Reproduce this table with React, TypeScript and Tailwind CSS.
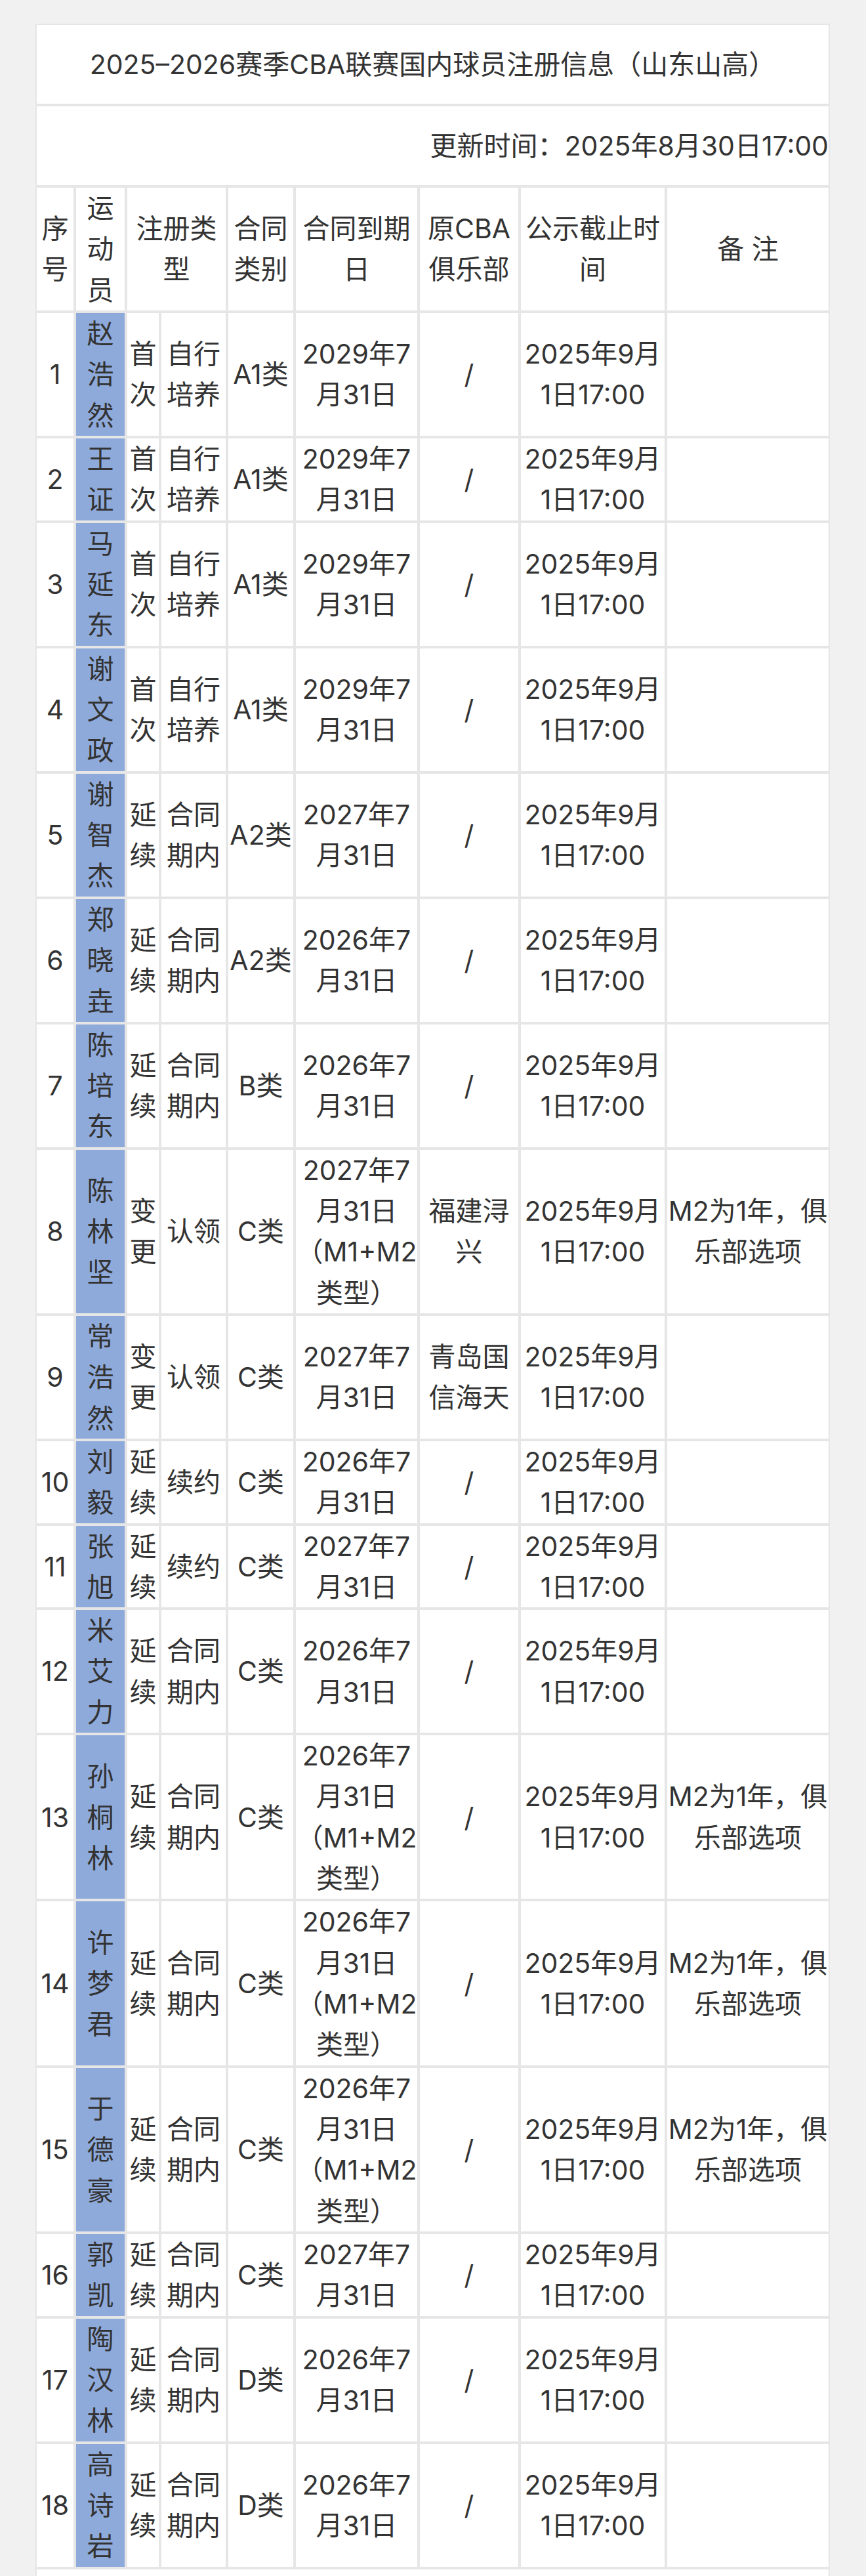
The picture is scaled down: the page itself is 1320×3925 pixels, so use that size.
type Row = {
  no: string;
  name: string;
  kind: string[];
  sub: string[];
  cls: string;
  date: string[];
  club: string[];
  note: string[];
};

const short = (y: string) => [`${y}年7`, "月31日"];
const long = (y: string) => [`${y}年7`, "月31日", "（M1+M2", "类型）"];
const option = ["M2为1年，俱", "乐部选项"];

const rows: Row[] = [
  { no: "1", name: "赵浩然", kind: ["首", "次"], sub: ["自行", "培养"], cls: "A1类", date: short("2029"), club: ["/"], note: [] },
  { no: "2", name: "王证", kind: ["首", "次"], sub: ["自行", "培养"], cls: "A1类", date: short("2029"), club: ["/"], note: [] },
  { no: "3", name: "马延东", kind: ["首", "次"], sub: ["自行", "培养"], cls: "A1类", date: short("2029"), club: ["/"], note: [] },
  { no: "4", name: "谢文政", kind: ["首", "次"], sub: ["自行", "培养"], cls: "A1类", date: short("2029"), club: ["/"], note: [] },
  { no: "5", name: "谢智杰", kind: ["延", "续"], sub: ["合同", "期内"], cls: "A2类", date: short("2027"), club: ["/"], note: [] },
  { no: "6", name: "郑晓垚", kind: ["延", "续"], sub: ["合同", "期内"], cls: "A2类", date: short("2026"), club: ["/"], note: [] },
  { no: "7", name: "陈培东", kind: ["延", "续"], sub: ["合同", "期内"], cls: "B类", date: short("2026"), club: ["/"], note: [] },
  { no: "8", name: "陈林坚", kind: ["变", "更"], sub: ["认领"], cls: "C类", date: long("2027"), club: ["福建浔", "兴"], note: option },
  { no: "9", name: "常浩然", kind: ["变", "更"], sub: ["认领"], cls: "C类", date: short("2027"), club: ["青岛国", "信海天"], note: [] },
  { no: "10", name: "刘毅", kind: ["延", "续"], sub: ["续约"], cls: "C类", date: short("2026"), club: ["/"], note: [] },
  { no: "11", name: "张旭", kind: ["延", "续"], sub: ["续约"], cls: "C类", date: short("2027"), club: ["/"], note: [] },
  { no: "12", name: "米艾力", kind: ["延", "续"], sub: ["合同", "期内"], cls: "C类", date: short("2026"), club: ["/"], note: [] },
  { no: "13", name: "孙桐林", kind: ["延", "续"], sub: ["合同", "期内"], cls: "C类", date: long("2026"), club: ["/"], note: option },
  { no: "14", name: "许梦君", kind: ["延", "续"], sub: ["合同", "期内"], cls: "C类", date: long("2026"), club: ["/"], note: option },
  { no: "15", name: "于德豪", kind: ["延", "续"], sub: ["合同", "期内"], cls: "C类", date: long("2026"), club: ["/"], note: option },
  { no: "16", name: "郭凯", kind: ["延", "续"], sub: ["合同", "期内"], cls: "C类", date: short("2027"), club: ["/"], note: [] },
  { no: "17", name: "陶汉林", kind: ["延", "续"], sub: ["合同", "期内"], cls: "D类", date: short("2026"), club: ["/"], note: [] },
  { no: "18", name: "高诗岩", kind: ["延", "续"], sub: ["合同", "期内"], cls: "D类", date: short("2026"), club: ["/"], note: [] },
];

function Cell({ lines, className = "" }: { lines: string[]; className?: string }) {
  return (
    <div className={`flex flex-col items-center justify-center whitespace-nowrap bg-white text-center ${className}`}>
      {lines.map((l, i) => (
        <span key={i}>{l}</span>
      ))}
    </div>
  );
}

export default function App() {
  return (
    <div className="min-h-screen bg-[#f1f1f1] pt-[36px] pl-[54px] font-['Inter','Noto_Sans_CJK_SC',sans-serif] text-[41px] leading-[62.33px] text-[#333333]">
      <div className="grid w-[1211px] grid-cols-[56px_74px_48px_98px_99px_185px_150px_219px_246px] gap-[4px] bg-[#e6e6e6] p-[2px]">
        {/* Title */}
        <div className="col-span-9 flex h-[120px] items-center justify-center whitespace-nowrap bg-white">
          2025–2026赛季CBA联赛国内球员注册信息（山东山高）
        </div>
        <div className="col-span-9 flex h-[120px] items-center justify-end whitespace-nowrap bg-white">
          更新时间：2025年8月30日17:00
        </div>

        {/* Header */}
        <Cell lines={["序", "号"]} />
        <Cell lines={["运", "动", "员"]} />
        <Cell lines={["注册类", "型"]} className="col-span-2" />
        <Cell lines={["合同", "类别"]} />
        <Cell lines={["合同到期", "日"]} />
        <Cell lines={["原CBA", "俱乐部"]} />
        <Cell lines={["公示截止时", "间"]} />
        <Cell lines={["备 注"]} />

        {rows.map((r) => (
          <div key={r.no} className="contents">
            <Cell lines={[r.no]} />
            <Cell lines={r.name.split("")} className="!bg-[#8eaadb]" />
            <Cell lines={r.kind} />
            <Cell lines={r.sub} />
            <Cell lines={[r.cls]} />
            <Cell lines={r.date} />
            <Cell lines={r.club} />
            <Cell lines={["2025年9月", "1日17:00"]} />
            <Cell lines={r.note} />
          </div>
        ))}

        <div className="col-span-9 h-[80px] bg-white" />
      </div>
    </div>
  );
}
